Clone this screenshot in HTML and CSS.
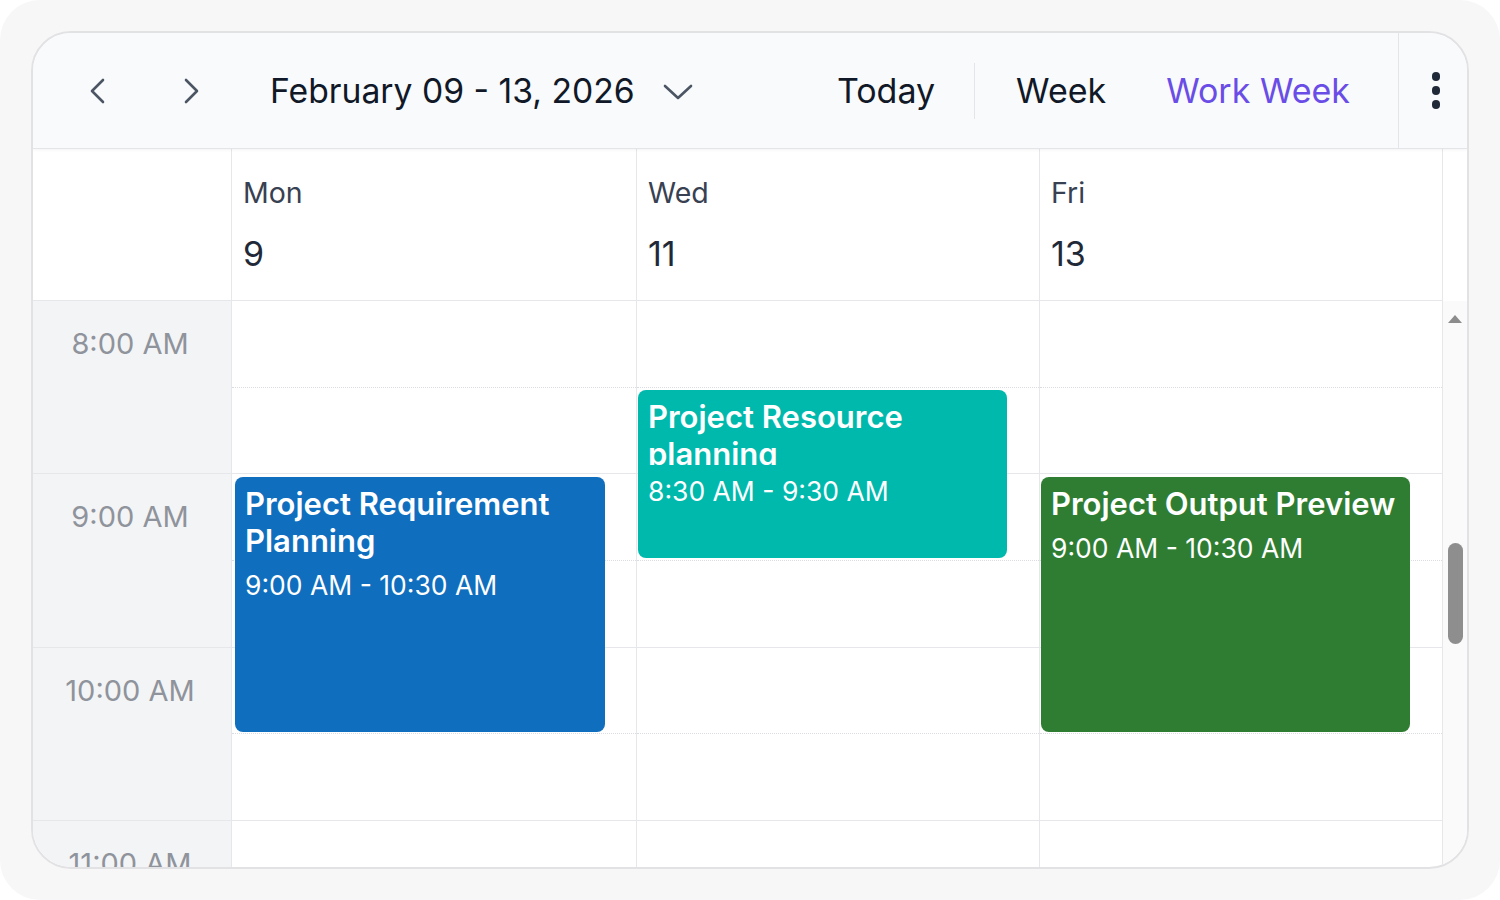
FILE: index.html
```html
<!DOCTYPE html>
<html lang="en">
<head>
<meta charset="utf-8">
<title>Scheduler</title>
<link rel="stylesheet" href="styles.css">
</head>
<body>
<div class="frame">
  <div class="card">
    <div class="toolbar">
      <button class="nav-btn nav-prev" aria-label="Previous">
        <svg width="16" height="26" viewBox="0 0 16 26"><polyline points="14,2 3,13 14,24" fill="none" stroke="#4b5563" stroke-width="2.6" stroke-linecap="round" stroke-linejoin="round"/></svg>
      </button>
      <button class="nav-btn nav-next" aria-label="Next">
        <svg width="16" height="26" viewBox="0 0 16 26"><polyline points="2,2 13,13 2,24" fill="none" stroke="#4b5563" stroke-width="2.6" stroke-linecap="round" stroke-linejoin="round"/></svg>
      </button>
      <div class="date-range">February 09 - 13, 2026</div>
      <svg class="date-caret" width="30" height="18" viewBox="0 0 30 18"><polyline points="2,3 15,15 28,3" fill="none" stroke="#4b5563" stroke-width="2.6" stroke-linecap="round" stroke-linejoin="round"/></svg>
      <div class="spacer"></div>
      <div class="tb-item">Today</div>
      <div class="tb-sep"></div>
      <div class="tb-item tb-week">Week</div>
      <div class="tb-item tb-active">Work Week</div>
      <div class="tb-more">
        <span class="dot"></span><span class="dot"></span><span class="dot"></span>
      </div>
    </div>

    <div class="dayhead">
      <div class="dh-corner"></div>
      <div class="dh-cell"><div class="dh-name">Mon</div><div class="dh-num">9</div></div>
      <div class="dh-cell"><div class="dh-name">Wed</div><div class="dh-num">11</div></div>
      <div class="dh-cell"><div class="dh-name">Fri</div><div class="dh-num">13</div></div>
      <div class="dh-gutter"></div>
    </div>

    <div class="body">
      <div class="times">
        <div class="time">8:00 AM</div>
        <div class="time">9:00 AM</div>
        <div class="time">10:00 AM</div>
        <div class="time">11:00 AM</div>
      </div>
      <div class="day">
        <div class="slot half"></div><div class="slot"></div>
        <div class="slot half"></div><div class="slot"></div>
        <div class="slot half"></div><div class="slot"></div>
        <div class="slot half"></div><div class="slot"></div>
        <div class="event ev-blue" style="top:176px;height:255px;left:3px;width:370px">
          <div class="ev-title">Project Requirement Planning</div>
          <div class="ev-time">9:00 AM - 10:30 AM</div>
        </div>
      </div>
      <div class="day">
        <div class="slot half"></div><div class="slot"></div>
        <div class="slot half"></div><div class="slot"></div>
        <div class="slot half"></div><div class="slot"></div>
        <div class="slot half"></div><div class="slot"></div>
        <div class="event ev-teal" style="top:89px;height:168px;left:1px;width:369px">
          <div class="ev-title ev-title-clip">Project Resource planning</div>
          <div class="ev-time">8:30 AM - 9:30 AM</div>
        </div>
      </div>
      <div class="day">
        <div class="slot half"></div><div class="slot"></div>
        <div class="slot half"></div><div class="slot"></div>
        <div class="slot half"></div><div class="slot"></div>
        <div class="slot half"></div><div class="slot"></div>
        <div class="event ev-green" style="top:176px;height:255px;left:1px;width:369px">
          <div class="ev-title">Project Output Preview</div>
          <div class="ev-time">9:00 AM - 10:30 AM</div>
        </div>
      </div>
      <div class="scrollbar">
        <div class="sb-up"></div>
        <div class="sb-thumb"></div>
      </div>
    </div>
  </div>
</div>
</body>
</html>
```

FILE: styles.css
```css
* { box-sizing: border-box; }
html, body { margin: 0; padding: 0; background: #ffffff; }
body { font-family: Inter, "Noto Sans", "Liberation Sans", sans-serif; }

.frame {
  width: 1500px;
  height: 900px;
  background: #f7f7f8;
  border-radius: 40px;
  padding: 31px;
}

.card {
  height: 838px;
  border: 2px solid #e2e2e4;
  border-radius: 40px;
  background: #ffffff;
  overflow: hidden;
  display: flex;
  flex-direction: column;
}

/* toolbar */
.toolbar {
  height: 116px;
  flex: none;
  background: #f8fafc;
  border-bottom: 1px solid #e3e5e8;
  box-shadow: 0 1px 3px rgba(0,0,0,0.05);
  display: flex;
  align-items: center;
  position: relative;
  z-index: 1;
}
.nav-btn {
  width: 48px;
  height: 48px;
  border: none;
  background: transparent;
  padding: 0;
  display: flex;
  align-items: center;
  justify-content: center;
}
.nav-prev { margin-left: 40px; }
.nav-next { margin-left: 47px; }
.date-range {
  margin-left: 54px;
  font-size: 33.7px;
  color: #111827;
}
.date-caret { margin-left: 28px; margin-top: 2px; }
.spacer { flex: 1; }
.tb-item {
  font-size: 34px;
  color: #111827;
}
.tb-sep {
  width: 1px;
  height: 56px;
  background: #e3e5e8;
  margin: 0 41px 0 39px;
}
.tb-week { margin-right: 60px; }
.tb-active { color: #6a4de6; margin-right: 48px; }
.tb-more {
  width: 69px;
  align-self: stretch;
  border-left: 1px solid #e3e5e8;
  display: flex;
  flex-direction: column;
  align-items: center;
  justify-content: center;
  gap: 5.5px;
  padding-left: 6px;
}
.dot {
  width: 8.5px;
  height: 8.5px;
  border-radius: 50%;
  background: #1f2937;
}

/* day header */
.dayhead {
  height: 152px;
  flex: none;
  display: grid;
  grid-template-columns: 199px 405px 403px 403px 1fr;
  background: #ffffff;
}
.dh-corner {
  border-right: 1px solid #e5e7eb;
  border-bottom: 1px solid #e5e7eb;
}
.dh-cell {
  border-right: 1px solid #e5e7eb;
  border-bottom: 1px solid #e5e7eb;
  padding: 27px 0 0 11px;
}
.dh-name {
  font-size: 28.5px;
  line-height: 34px;
  color: #374151;
}
.dh-num {
  margin-top: 24px;
  font-size: 34px;
  line-height: 40px;
  color: #1f2937;
}
.dh-gutter { background: #ffffff; }

/* body */
.body {
  flex: 1;
  display: grid;
  grid-template-columns: 199px 405px 403px 403px 1fr;
  overflow: hidden;
}
.times {
  background: #f3f4f6;
  border-right: 1px solid #e5e7eb;
}
.time {
  height: 173.3px;
  border-bottom: 1px solid #e5e7eb;
  text-align: center;
  font-size: 29px;
  line-height: 34px;
  padding-top: 26px;
  padding-right: 4px;
  color: #8f939b;
}
.day {
  position: relative;
  border-right: 1px solid #e5e7eb;
}
.slot {
  height: 86.65px;
  border-bottom: 1px solid #e5e7eb;
}
.slot.half {
  border-bottom: 1px dotted #d9dce1;
}

.event {
  position: absolute;
  border-radius: 8px;
  color: #ffffff;
  padding: 8px 8px 0 10px;
  overflow: hidden;
}
.ev-blue { background: #106ebe; }
.ev-teal { background: #00b9ad; }
.ev-green { background: #2e7d32; }
.ev-title {
  font-size: 31px;
  line-height: 37px;
  font-weight: 600;
}
.ev-title-clip {
  max-height: 67px;
  overflow: hidden;
}
.ev-time {
  margin-top: 11px;
  font-size: 26.5px;
  line-height: 30px;
}

.scrollbar {
  background: #fafafa;
  display: flex;
  flex-direction: column;
  align-items: center;
}
.sb-up {
  margin-top: 14px;
  width: 0;
  height: 0;
  border-left: 7px solid transparent;
  border-right: 7px solid transparent;
  border-bottom: 8px solid #8c8c8c;
}
.sb-thumb {
  margin-top: 220px;
  width: 15px;
  height: 101px;
  border-radius: 8px;
  background: #8e8e8e;
}
```
